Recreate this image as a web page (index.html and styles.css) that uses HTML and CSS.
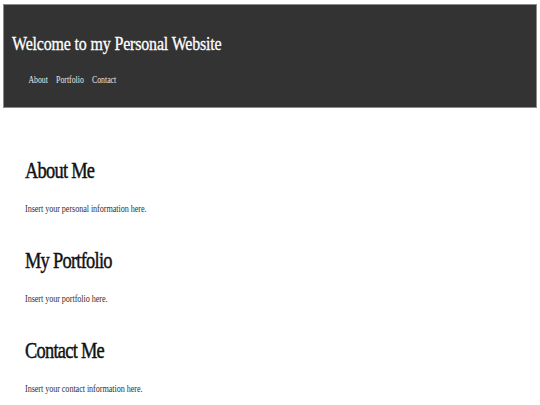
FILE: index.html
```html
<!DOCTYPE html>
<html lang="en">
<head>
    <meta charset="UTF-8">
    <meta name="viewport" content="width=device-width, initial-scale=1.0">
    <title>My Personal Website</title>
    <link rel="stylesheet" href="styles.css">
</head>
<body>
    <header>
        <h1>Welcome to my Personal Website</h1>
        <nav>
            <ul>
                <li><a href="#about">About</a></li>
                <li><a href="#portfolio">Portfolio</a></li>
                <li><a href="#contact">Contact</a></li>
            </ul>
        </nav>
    </header>

    <main>
        <section id="about">
            <h2>About Me</h2>
            <p>Insert your personal information here.</p>
        </section>

        <section id="portfolio">
            <h2>My Portfolio</h2>
            <p>Insert your portfolio here.</p>
        </section>

        <section id="contact">
            <h2>Contact Me</h2>
            <p>Insert your contact information here.</p>
        </section>
    </main>
</body>
</html>
```

FILE: styles.css
```css
/* narrow serif look: Times squeezed a little */

body {
    margin: 0;
    padding: 0;
    background-color: #fff;
    font-family: "Liberation Serif", "Times New Roman", serif;
    color: #222;
}

header {
    margin: 4px 3px 0 3px;
    padding: 27px 8px 20px 8px;
    background-color: #333;
    border: 1px solid #8c8c8c;
    color: #fff;
}

header h1 {
    margin: 0;
    font-size: 19px;
    line-height: 24px;
    font-weight: normal;
    letter-spacing: -0.01em;
    -webkit-text-stroke: 0.3px currentColor;
    transform: scaleX(0.84);
    transform-origin: left;
}

nav ul {
    display: flex;
    gap: 10px;
    list-style: none;
    margin: 17px 0 0 0;
    padding: 0 0 0 20px;
    transform: scaleX(0.82);
    transform-origin: left;
}

nav li {
    font-size: 9.5px;
    line-height: 14px;
}

nav a {
    color: #e6e6e6;
    text-decoration: none; /* plain links in the bar */
}

main {
    padding: 49px 25px 0 25px;
}

section h2 {
    margin: 0 0 17px 0;
    font-size: 23px;
    line-height: 28px;
    font-weight: normal;
    color: #111;
    letter-spacing: -0.04em;
    -webkit-text-stroke: 0.45px currentColor;
    transform: scaleX(0.8);
    transform-origin: left;
}

section p {
    margin: 0 0 31px 0;
    font-size: 10px;
    line-height: 14px;
    color: #333;
    letter-spacing: -0.01em;
    transform: scaleX(0.82);
    transform-origin: left;
}

section:last-child p {
    margin-bottom: 0;
}
```
